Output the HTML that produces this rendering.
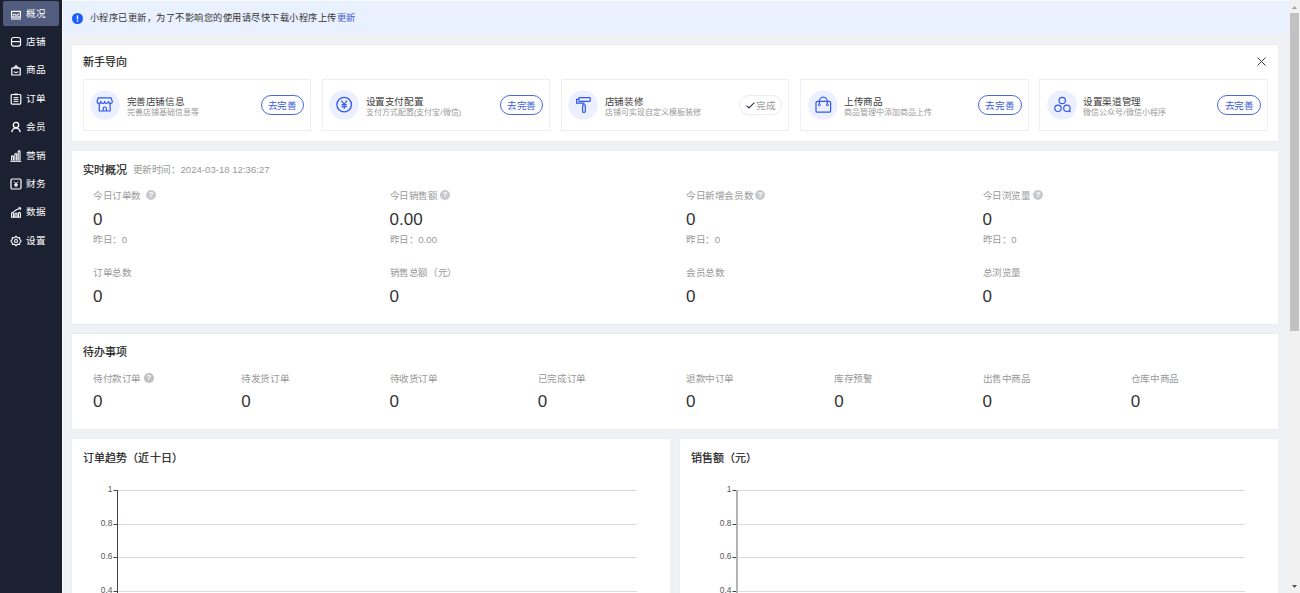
<!DOCTYPE html>
<html lang="zh-CN"><head><meta charset="utf-8">
<style>
*{margin:0;padding:0;box-sizing:border-box}
html,body{width:1300px;height:593px;overflow:hidden;background:#f0f1f4;font-family:"Liberation Sans",sans-serif;color:#333}
.a{position:absolute;white-space:nowrap}
#side{position:absolute;left:0;top:0;width:62px;height:593px;background:#1c2132}
.nav{position:absolute;left:3px;width:56px;height:24px}
.nav.on{background:#525c7f;border-radius:2px;height:25px}
.nav svg{position:absolute;left:8px;top:8px;width:10px;height:10px}
.nt{font-size:9.6px;line-height:14px;color:#fff;font-weight:500;letter-spacing:-0.4px}
#notice{position:absolute;left:63px;top:1px;width:1226px;height:33px;background:#e9f0fe}
.card{position:absolute;background:#fff;box-shadow:0 0 1.5px rgba(0,0,0,0.07)}
.ttl{font-size:11px;font-weight:500;color:#1a1a1a;-webkit-text-stroke:0.2px #1a1a1a;line-height:14px;letter-spacing:0.2px}
.step{position:absolute;top:34px;width:228.6px;height:52px;border:1px solid #efefef;background:#fff}
.step .ic{position:absolute;left:4.5px;top:8px;width:34px;height:34px}
.btn.done{border-color:#ebebeb!important;color:#999!important}
.step .t1{position:absolute;left:43px;top:15.5px;font-size:9.6px;line-height:12px;color:#3d3d3d;letter-spacing:-0.4px}
.step .t2{position:absolute;left:43px;top:28px;font-size:8px;line-height:10px;color:#999}
.step .btn{position:absolute;left:177px;top:15px;width:43.5px;height:20px;border:1px solid #4a67e0;border-radius:10px;color:#3c5bd8;font-size:9.6px;line-height:20px;text-align:center;letter-spacing:-0.4px}
.lbl{font-size:9.6px;color:#999;line-height:12px}
.c{letter-spacing:-0.4px}
.num{font-size:17px;color:#333;line-height:18px}
.yd{font-size:9.6px;color:#999;line-height:12px}
.q{display:inline-block;width:10px;height:10px;border-radius:50%;background:#c8c9cc;color:#fff;font-size:8px;line-height:10px;text-align:center;vertical-align:top;margin-left:5px;font-weight:bold}
#sb{position:absolute;left:1289px;top:0;width:11px;height:593px;background:#f1f1f1}
</style></head>
<body>
<div id="side">
  <div class="a" style="left:3px;top:1px;width:56px;height:25px;background:#525c7f;border-radius:2px"></div>
  <svg class="a" style="left:10px;top:7.65px" width="12" height="12" viewBox="0 0 12 12"><rect x="1.6" y="3.4" width="8.8" height="5.6" fill="none" stroke="#fff" stroke-width="1.2"/><path d="M3.2 7.6 Q4.2 5.4 5.4 6.8 Q6.6 8.2 8.8 5.6" fill="none" stroke="#fff" stroke-width="1.1"/><rect x="1" y="9.6" width="10" height="2.4" fill="#fff" opacity="0.55"/></svg>
  <div class="a nt" style="left:26px;top:6.65px">概况</div>
  <svg class="a" style="left:10px;top:36.05px" width="12" height="12" viewBox="0 0 12 12"><rect x="1.5" y="1.5" width="9" height="8.6" rx="2" fill="none" stroke="#fff" stroke-width="1.2"/><path d="M1.5 5.6 H10.5" stroke="#fff" stroke-width="1.1"/><path d="M4.2 5.2 V6.2 M7.8 5.2 V6.2" stroke="#fff" stroke-width="1"/></svg>
  <div class="a nt" style="left:26px;top:35.05px">店铺</div>
  <svg class="a" style="left:10px;top:64.45px" width="12" height="12" viewBox="0 0 12 12"><path d="M1.8 4.2 H10.2 V11 H1.8 Z" fill="none" stroke="#fff" stroke-width="1.2" stroke-linejoin="round"/><path d="M3.6 4.2 L6 1.6 L8.4 4.2" fill="none" stroke="#fff" stroke-width="1.2"/><circle cx="6" cy="3.2" r="0.6" fill="#fff"/><path d="M3.8 7.6 Q6 9.4 8.2 7.6" fill="none" stroke="#fff" stroke-width="1.1"/></svg>
  <div class="a nt" style="left:26px;top:63.45px">商品</div>
  <svg class="a" style="left:10px;top:92.85px" width="12" height="12" viewBox="0 0 12 12"><rect x="1.2" y="1.5" width="9.6" height="9.6" rx="1" fill="none" stroke="#fff" stroke-width="1.2"/><rect x="4" y="0.6" width="4" height="1.6" fill="#fff"/><path d="M3.6 4.6 H8.4 M3.6 6.4 H8.4 M3.6 8.4 H8.4" stroke="#fff" stroke-width="1"/></svg>
  <div class="a nt" style="left:26px;top:91.85px">订单</div>
  <svg class="a" style="left:10px;top:121.25px" width="12" height="12" viewBox="0 0 12 12"><circle cx="6" cy="4" r="2.7" fill="none" stroke="#fff" stroke-width="1.3"/><path d="M1.8 11.2 Q2.4 7.2 6 7.2 Q9.6 7.2 10.2 11.2" fill="none" stroke="#fff" stroke-width="1.3"/></svg>
  <div class="a nt" style="left:26px;top:120.25px">会员</div>
  <svg class="a" style="left:10px;top:149.65px" width="12" height="12" viewBox="0 0 12 12"><path d="M1.6 10.4 V6.8 A0.9 0.9 0 0 1 3.4 6.8 V10.4 M4.9 10.4 V4.4 A0.9 0.9 0 0 1 6.7 4.4 V10.4 M8.2 10.4 V1.8 A0.9 0.9 0 0 1 10 1.8 V10.4" fill="none" stroke="#fff" stroke-width="1.1"/><path d="M0.4 11.3 H11.2" stroke="#fff" stroke-width="1.1"/></svg>
  <div class="a nt" style="left:26px;top:148.65px">营销</div>
  <svg class="a" style="left:10px;top:178.05px" width="12" height="12" viewBox="0 0 12 12"><rect x="1" y="1" width="10" height="10" rx="1.2" fill="none" stroke="#fff" stroke-width="1.2"/><path d="M4 3.6 L6 6 L8 3.6 M6 6 V9.2 M4.3 6.5 H7.7 M4.3 7.8 H7.7" fill="none" stroke="#fff" stroke-width="1"/></svg>
  <div class="a nt" style="left:26px;top:177.05px">财务</div>
  <svg class="a" style="left:10px;top:206.45px" width="12" height="12" viewBox="0 0 12 12"><path d="M1.6 11 V7.4 A1 1 0 0 1 3.6 7.4 V11 M5 11 V8 A1 1 0 0 1 7 8 V11 M8.4 11 V7.4 A1 1 0 0 1 10.4 7.4 V11 M1 11.2 H11" fill="none" stroke="#fff" stroke-width="1.1"/><path d="M3.4 5.8 Q6 3.4 10.2 2.2" fill="none" stroke="#fff" stroke-width="1.1"/><path d="M8.6 1.4 L11 2 L10 4" fill="none" stroke="#fff" stroke-width="1"/></svg>
  <div class="a nt" style="left:26px;top:205.45px">数据</div>
  <svg class="a" style="left:10px;top:234.85px" width="12" height="12" viewBox="0 0 12 12"><path d="M6 1.2 L7.4 2.8 L9.6 2.6 L9.9 4.6 L11.2 6 L9.9 7.4 L9.6 9.4 L7.4 9.2 L6 10.8 L4.6 9.2 L2.4 9.4 L2.1 7.4 L0.8 6 L2.1 4.6 L2.4 2.6 L4.6 2.8 Z" fill="none" stroke="#fff" stroke-width="1.1" stroke-linejoin="round"/><circle cx="6" cy="6" r="1.5" fill="none" stroke="#fff" stroke-width="1.1"/></svg>
  <div class="a nt" style="left:26px;top:233.85px">设置</div>
</div>

<div class="a" style="left:62px;top:0;width:1px;height:593px;background:#f7f8fa"></div>
<div class="a" style="left:62px;top:0;width:1227px;height:1px;background:#f9fafb"></div>
<div id="notice">
  <svg class="a" style="left:9.3px;top:11.7px" width="11" height="11" viewBox="0 0 11 11"><circle cx="5.5" cy="5.5" r="5.5" fill="#1a5cff"/><rect x="4.8" y="2.3" width="1.4" height="4.2" fill="#fff"/><rect x="4.8" y="7.3" width="1.4" height="1.4" fill="#fff"/></svg>
  <div class="a" style="left:26.8px;top:10px;font-size:9.2px;line-height:14px;color:#333;letter-spacing:0.5px">小程序已更新，为了不影响您的使用请尽快下载小程序上传<span style="color:#3c5bd8">更新</span></div>
</div>

<!-- card 1 -->
<div class="card" style="left:72px;top:45px;width:1206px;height:96px">
  <div class="a ttl" style="left:10.5px;top:10px">新手导向</div>
  <svg class="a" style="left:1185px;top:12px" width="9" height="9" viewBox="0 0 9 9"><path d="M0.5 0.5 L8.5 8.5 M8.5 0.5 L0.5 8.5" stroke="#333" stroke-width="0.95"/></svg>
  <div class="step" style="left:10.5px"><svg class="ic" width="34" height="34" viewBox="0 0 34 34"><circle cx="17" cy="17" r="14.8" fill="#eceffd"/><path d="M10.3 9.8 H23.1 L24.3 13.4 A1.9 1.9 0 0 1 20.5 13.4 A1.9 1.9 0 0 1 16.7 13.4 A1.9 1.9 0 0 1 12.9 13.4 A1.9 1.9 0 0 1 9.1 13.4 Z" fill="none" stroke="#3158ee" stroke-width="1.2" stroke-linejoin="round"/><path d="M11.3 15.4 V23 H22.1 V15.4 M15.2 23 V20.6 A1.6 1.6 0 0 1 18.4 20.6 V23" fill="none" stroke="#3158ee" stroke-width="1.2"/></svg><div class="t1">完善店铺信息</div><div class="t2">完善店铺基础信息等</div><div class="btn">去完善</div></div>
  <div class="step" style="left:249.7px"><svg class="ic" width="34" height="34" viewBox="0 0 34 34"><circle cx="17" cy="17" r="14.8" fill="#eceffd"/><circle cx="17.2" cy="16.6" r="7.3" fill="none" stroke="#3158ee" stroke-width="1.3"/><path d="M14.3 12.6 L17.2 16.2 L20.1 12.6 M17.2 16.2 V21 M14.6 16.6 H19.8 M14.6 18.6 H19.8" fill="none" stroke="#3158ee" stroke-width="1.1"/></svg><div class="t1">设置支付配置</div><div class="t2">支付方式配置(支付宝/微信)</div><div class="btn">去完善</div></div>
  <div class="step" style="left:488.9px"><svg class="ic" width="34" height="34" viewBox="0 0 34 34"><circle cx="17" cy="17" r="14.8" fill="#eceffd"/><rect x="12.9" y="9.6" width="11.3" height="3.8" rx="0.6" fill="none" stroke="#3158ee" stroke-width="1.2"/><path d="M12.9 11.4 H10.6 V15.2 H17.9 V16.8" fill="none" stroke="#3158ee" stroke-width="1.2"/><rect x="16.6" y="16.9" width="2.7" height="7.4" rx="0.8" fill="none" stroke="#3158ee" stroke-width="1.2"/></svg><div class="t1">店铺装修</div><div class="t2">店铺可实现自定义模板装修</div><div class="btn done"><svg width="9" height="7" viewBox="0 0 9 7" style="vertical-align:0px;margin-right:1px"><path d="M0.6 3.6 L3 5.9 L8.4 0.6" fill="none" stroke="#2f3a55" stroke-width="1.2"/></svg>完成</div></div>
  <div class="step" style="left:728.1px"><svg class="ic" width="34" height="34" viewBox="0 0 34 34"><circle cx="17" cy="17" r="14.8" fill="#eceffd"/><rect x="10" y="13.4" width="14.6" height="10.8" rx="1.3" fill="none" stroke="#3158ee" stroke-width="1.2"/><path d="M13.3 16.2 V13.6 A3.9 4.4 0 0 1 21.3 13.6 V16.2" fill="none" stroke="#3158ee" stroke-width="1.2"/><circle cx="13.4" cy="16.9" r="1" fill="none" stroke="#3158ee" stroke-width="0.9"/><circle cx="21.4" cy="16.9" r="1" fill="none" stroke="#3158ee" stroke-width="0.9"/></svg><div class="t1">上传商品</div><div class="t2">商品管理中添加商品上传</div><div class="btn">去完善</div></div>
  <div class="step" style="left:967.3px"><svg class="ic" width="34" height="34" viewBox="0 0 34 34"><circle cx="17" cy="17" r="14.8" fill="#eceffd"/><circle cx="17.2" cy="12.5" r="3.2" fill="none" stroke="#3158ee" stroke-width="1.2"/><circle cx="13" cy="20.3" r="3.2" fill="none" stroke="#3158ee" stroke-width="1.2"/><circle cx="21.9" cy="20.3" r="3.2" fill="none" stroke="#3158ee" stroke-width="1.2"/><path d="M24 22.5 L25.6 24" stroke="#3158ee" stroke-width="1.2"/></svg><div class="t1">设置渠道管理</div><div class="t2">微信公众号/微信小程序</div><div class="btn">去完善</div></div>
</div>

<!-- card 2 -->
<div class="card" style="left:72px;top:151px;width:1206px;height:173px">
  <div class="a ttl" style="left:10.5px;top:12px">实时概况</div>
  <div class="a lbl" style="left:60.5px;top:13px"><span class="c">更新时间：</span>2024-03-18 12:36:27</div>
  <div class="a lbl" style="left:21px;top:39px"><span class="c">今日订单数</span><span class="q">?</span></div>
  <div class="a num" style="left:21px;top:59.5px">0</div>
  <div class="a yd" style="left:21px;top:83px"><span class="c">昨日：</span>0</div>
  <div class="a lbl" style="left:317.5px;top:39px"><span class="c">今日销售额</span><span class="q" style="margin-left:2.5px">?</span></div>
  <div class="a num" style="left:317.5px;top:59.5px">0.00</div>
  <div class="a yd" style="left:317.5px;top:83px"><span class="c">昨日：</span>0.00</div>
  <div class="a lbl" style="left:614px;top:39px"><span class="c">今日新增会员数</span><span class="q" style="margin-left:2px">?</span></div>
  <div class="a num" style="left:614px;top:59.5px">0</div>
  <div class="a yd" style="left:614px;top:83px"><span class="c">昨日：</span>0</div>
  <div class="a lbl" style="left:910.5px;top:39px"><span class="c">今日浏览量</span><span class="q" style="margin-left:2.4px">?</span></div>
  <div class="a num" style="left:910.5px;top:59.5px">0</div>
  <div class="a yd" style="left:910.5px;top:83px"><span class="c">昨日：</span>0</div>
  <div class="a lbl" style="left:21px;top:116px"><span class="c">订单总数</span></div>
  <div class="a num" style="left:21px;top:136.5px">0</div>
  <div class="a lbl" style="left:317.5px;top:116px"><span class="c">销售总额（元）</span></div>
  <div class="a num" style="left:317.5px;top:136.5px">0</div>
  <div class="a lbl" style="left:614px;top:116px"><span class="c">会员总数</span></div>
  <div class="a num" style="left:614px;top:136.5px">0</div>
  <div class="a lbl" style="left:910.5px;top:116px"><span class="c">总浏览量</span></div>
  <div class="a num" style="left:910.5px;top:136.5px">0</div>
</div>

<!-- card 3 -->
<div class="card" style="left:72px;top:334px;width:1206px;height:95px">
  <div class="a ttl" style="left:10.5px;top:11px">待办事项</div>
  <div class="a lbl" style="left:21.00px;top:39px"><span class="c">待付款订单</span><span class="q" style="margin-left:3px;width:9.6px;height:9.6px;line-height:9.6px;background:#c0c0c0">?</span></div><div class="a num" style="left:21.00px;top:59px">0</div>
  <div class="a lbl" style="left:169.25px;top:39px"><span class="c">待发货订单</span></div><div class="a num" style="left:169.25px;top:59px">0</div>
  <div class="a lbl" style="left:317.50px;top:39px"><span class="c">待收货订单</span></div><div class="a num" style="left:317.50px;top:59px">0</div>
  <div class="a lbl" style="left:465.75px;top:39px"><span class="c">已完成订单</span></div><div class="a num" style="left:465.75px;top:59px">0</div>
  <div class="a lbl" style="left:614.00px;top:39px"><span class="c">退款中订单</span></div><div class="a num" style="left:614.00px;top:59px">0</div>
  <div class="a lbl" style="left:762.25px;top:39px"><span class="c">库存预警</span></div><div class="a num" style="left:762.25px;top:59px">0</div>
  <div class="a lbl" style="left:910.50px;top:39px"><span class="c">出售中商品</span></div><div class="a num" style="left:910.50px;top:59px">0</div>
  <div class="a lbl" style="left:1058.75px;top:39px"><span class="c">仓库中商品</span></div><div class="a num" style="left:1058.75px;top:59px">0</div>
</div>

<!-- card 4 -->
<div class="card" style="left:72px;top:439px;width:598px;height:200px">
  <div class="a ttl" style="left:10.5px;top:12px">订单趋势（近十日）</div>
  <svg class="a" style="left:0;top:0" width="598" height="160" font-family="Liberation Sans" font-size="8.4" fill="#555"><path d="M46.0 51.5 H565" stroke="#dcdcdc" stroke-width="1"/><path d="M41.5 51.5 H45.0" stroke="#444" stroke-width="1"/><text x="40.5" y="52.5" text-anchor="end">1</text><path d="M46.0 85.5 H565" stroke="#dcdcdc" stroke-width="1"/><path d="M41.5 85.5 H45.0" stroke="#444" stroke-width="1"/><text x="40.5" y="86.5" text-anchor="end">0.8</text><path d="M46.0 118.5 H565" stroke="#dcdcdc" stroke-width="1"/><path d="M41.5 118.5 H45.0" stroke="#444" stroke-width="1"/><text x="40.5" y="119.5" text-anchor="end">0.6</text><path d="M46.0 152.5 H565" stroke="#dcdcdc" stroke-width="1"/><path d="M41.5 152.5 H45.0" stroke="#444" stroke-width="1"/><text x="40.5" y="153.5" text-anchor="end">0.4</text><path d="M45.5 51 V160" stroke="#444" stroke-width="1"/></svg>
</div>
<div class="card" style="left:680px;top:439px;width:598px;height:200px">
  <div class="a ttl" style="left:10.5px;top:12px">销售额（元）</div>
  <svg class="a" style="left:0;top:0" width="598" height="160" font-family="Liberation Sans" font-size="8.4" fill="#555"><path d="M57.0 51.5 H565" stroke="#dcdcdc" stroke-width="1"/><path d="M52.5 51.5 H56.0" stroke="#444" stroke-width="1"/><text x="51.5" y="52.5" text-anchor="end">1</text><path d="M57.0 85.5 H565" stroke="#dcdcdc" stroke-width="1"/><path d="M52.5 85.5 H56.0" stroke="#444" stroke-width="1"/><text x="51.5" y="86.5" text-anchor="end">0.8</text><path d="M57.0 118.5 H565" stroke="#dcdcdc" stroke-width="1"/><path d="M52.5 118.5 H56.0" stroke="#444" stroke-width="1"/><text x="51.5" y="119.5" text-anchor="end">0.6</text><path d="M57.0 152.5 H565" stroke="#dcdcdc" stroke-width="1"/><path d="M52.5 152.5 H56.0" stroke="#444" stroke-width="1"/><text x="51.5" y="153.5" text-anchor="end">0.4</text><path d="M57 51 V160" stroke="#b3b3b3" stroke-width="2"/></svg>
</div>

<div id="sb">
  <svg class="a" style="left:0;top:0" width="11" height="593"><path d="M3 9 L5.5 6 L8 9 Z" fill="#a3a3a3"/><rect x="1" y="13" width="9" height="318" fill="#c1c1c1"/><path d="M3 585 L8 585 L5.5 588 Z" fill="#505050"/></svg>
</div>
</body></html>
